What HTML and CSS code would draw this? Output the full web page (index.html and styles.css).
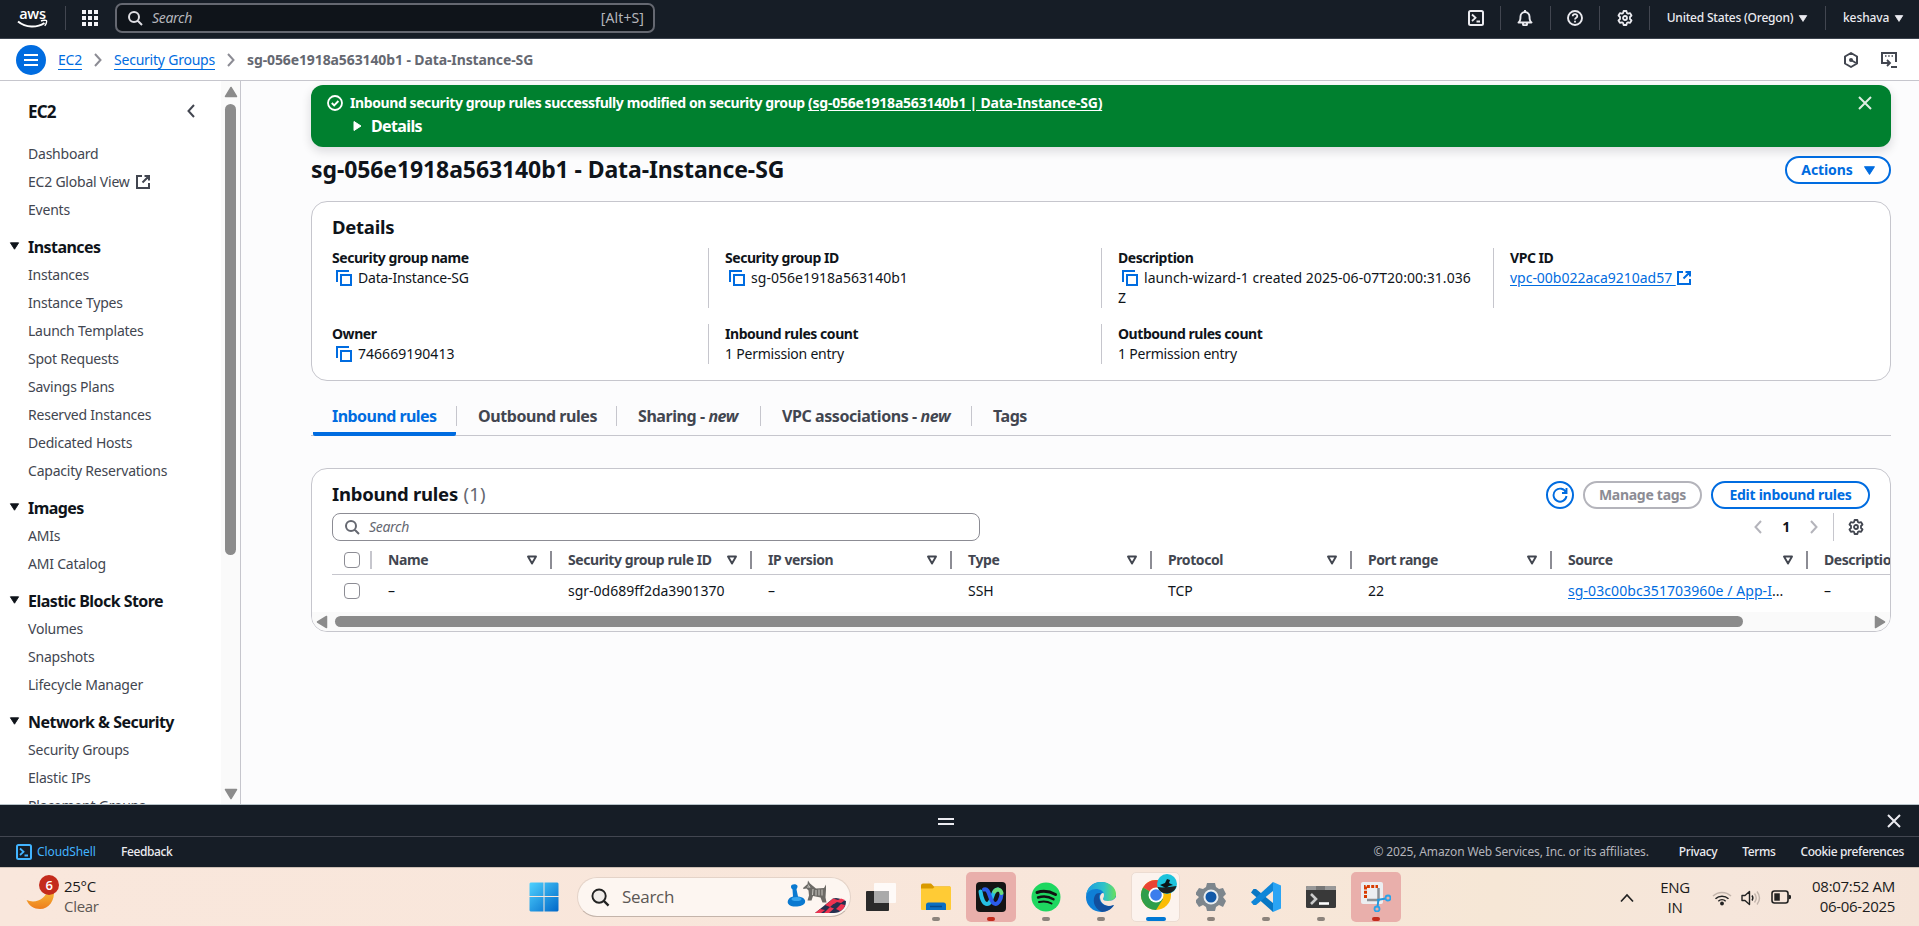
FILE: index.html
```html
<!DOCTYPE html>
<html lang="en">
<head>
<meta charset="utf-8">
<title>EC2 - Security group details</title>
<link rel="stylesheet" href="styles.css">
</head>
<body>
<svg class="defs" width="0" height="0">
  <symbol id="copy" viewBox="0 0 16 16"><path d="M1 12V1h12M5 5h10v10H5z" fill="none" stroke="currentColor" stroke-width="2"/></symbol>
  <symbol id="external" viewBox="0 0 16 16"><path d="M7 2H2v12h12V9M9.500 2H14v4.500M14 2 7.500 8.500" fill="none" stroke="currentColor" stroke-width="2"/></symbol>
  <symbol id="search" viewBox="0 0 16 16"><path d="M12 7A5 5 0 1 1 2 7a5 5 0 0 1 10 0zM10.500 10.500 15 15" fill="none" stroke="currentColor" stroke-width="2"/></symbol>
  <symbol id="gear" viewBox="0 0 16 16"><path d="M6.600 1h2.800l.5 2 1.200.7 2-.6 1.400 2.400L13 7v2l1.500 1.500-1.400 2.400-2-.6-1.200.7-.5 2H6.600l-.5-2-1.200-.7-2 .6-1.400-2.400L3 9V7L1.500 5.500l1.400-2.400 2 .6L6.100 3z" fill="none" stroke="currentColor" stroke-width="1.800" stroke-linejoin="round"/><circle cx="8" cy="8" r="2" fill="none" stroke="currentColor" stroke-width="1.800"/></symbol>
  <symbol id="shell" viewBox="0 0 16 16"><rect x="1" y="1" width="14" height="14" rx="1.500" fill="none" stroke="currentColor" stroke-width="2"/><path d="m4 4.500 3.500 3.300L4 11M8.500 11.500H12" fill="none" stroke="currentColor" stroke-width="1.800"/></symbol>
  <symbol id="close" viewBox="0 0 16 16"><path d="m2 2 12 12M14 2 2 14" fill="none" stroke="currentColor" stroke-width="2"/></symbol>
  <symbol id="left" viewBox="0 0 16 16"><path d="M11 2 5.500 8l5.500 6" fill="none" stroke="currentColor" stroke-width="2"/></symbol>
  <symbol id="right" viewBox="0 0 16 16"><path d="m5 2 5.500 6L5 14" fill="none" stroke="currentColor" stroke-width="2"/></symbol>
  <symbol id="down" viewBox="0 0 12 10"><path d="M1.500 1.500h9L6 8.500z" fill="currentColor" stroke="currentColor" stroke-width="1" stroke-linejoin="round"/></symbol>
  <symbol id="sort" viewBox="0 0 12 12"><path d="M2 2.500h8L6 9.500z" fill="none" stroke="currentColor" stroke-width="1.900" stroke-linejoin="round"/></symbol>
  <symbol id="scroll-tri" viewBox="0 0 14 12"><path d="M7 1.500 12.500 10.500H1.500z" fill="#8b8b8b" stroke="#8b8b8b" stroke-width="1.500" stroke-linejoin="round"/></symbol>
</svg>

<header class="topbar">
  <svg class="aws" viewBox="0 0 32 22">
    <text x="15.500" y="12" text-anchor="middle" class="aws-word">aws</text>
    <path d="M1 14.500c8 6.500 19 6.500 26.500 1.500" fill="none" stroke="#fff" stroke-width="2"/>
    <path d="M24 14c2-1 5-1 5.500-.3.500.8-.4 3.500-1.800 5" fill="none" stroke="#fff" stroke-width="1.400"/>
  </svg>
  <span class="sep"></span>
  <svg class="apps" viewBox="0 0 16 16" fill="#f3f3f7"><path d="M0 0h4v4H0zM6 0h4v4H6zM12 0h4v4h-4zM0 6h4v4H0zM6 6h4v4H6zM12 6h4v4h-4zM0 12h4v4H0zM6 12h4v4H6zM12 12h4v4h-4z"/></svg>
  <div class="topsearch"><svg class="ic"><use href="#search"/></svg><em>Search</em><span class="key">[Alt+S]</span></div>
  <div class="topright">
    <span class="cell c1"><svg class="ic"><use href="#shell"/></svg></span>
    <span class="cell c2"><svg class="ic" viewBox="0 0 16 16"><path d="M1.500 12.500c1.500-1 2-2.500 2-6a4.500 4.500 0 0 1 9 0c0 3.500.5 5 2 6zM8 0v2.500M6 13v1.500a1 1 0 0 0 1 .8h2a1 1 0 0 0 1-.8V13" fill="none" stroke="currentColor" stroke-width="1.900" stroke-linejoin="round"/></svg></span>
    <span class="cell c3"><svg class="ic" viewBox="0 0 16 16"><circle cx="8" cy="8" r="7" fill="none" stroke="currentColor" stroke-width="1.900"/><path d="M5.700 6.300c.1-3 4.700-2.800 4.600-.1C10.300 7.800 8 7.600 8 9.600M8 10.700v1.800" fill="none" stroke="currentColor" stroke-width="1.800"/></svg></span>
    <span class="cell c4"><svg class="ic"><use href="#gear"/></svg></span>
    <span class="cell c5">United States (Oregon)<svg class="caret"><use href="#down"/></svg></span>
    <span class="cell c6">keshava<svg class="caret"><use href="#down"/></svg></span>
  </div>
</header>

<div class="crumbs">
  <span class="menu"><i></i><i></i><i></i></span>
  <a class="crumb">EC2</a>
  <svg class="ic chev"><use href="#right"/></svg>
  <a class="crumb">Security Groups</a>
  <svg class="ic chev"><use href="#right"/></svg>
  <b>sg-056e1918a563140b1 - Data-Instance-SG</b>
  <span class="tools">
    <svg class="ic" viewBox="0 0 16 16"><path d="M8 1l6 3.500v7L8 15l-6-3.500v-7z" fill="none" stroke="currentColor" stroke-width="2" stroke-linejoin="round"/><circle cx="8" cy="8" r="2" fill="currentColor"/><path d="m8 8 5 3" stroke="currentColor" stroke-width="1.800"/></svg>
    <svg class="ic" viewBox="0 0 16 16"><path d="M5 11H1V1h14v9M10 15h6" fill="none" stroke="currentColor" stroke-width="2"/><path d="M4 4h1.500M7.200 4h1.500M10.500 4H12" stroke="currentColor" stroke-width="1.600"/><path d="M4 11h4.500M6 8l3 3-3 3" fill="none" stroke="currentColor" stroke-width="1.800"/></svg>
  </span>
</div>

<div class="middle">
  <aside class="side">
    <nav>
      <div class="navhead">EC2<svg class="ic"><use href="#left"/></svg></div>
      <a>Dashboard</a>
      <a>EC2 Global View<svg class="ic"><use href="#external"/></svg></a>
      <a>Events</a>
      <h4><svg class="caret"><use href="#down"/></svg>Instances</h4>
      <a>Instances</a><a>Instance Types</a><a>Launch Templates</a><a>Spot Requests</a><a>Savings Plans</a><a>Reserved Instances</a><a>Dedicated Hosts</a><a>Capacity Reservations</a>
      <h4><svg class="caret"><use href="#down"/></svg>Images</h4>
      <a>AMIs</a><a>AMI Catalog</a>
      <h4><svg class="caret"><use href="#down"/></svg>Elastic Block Store</h4>
      <a>Volumes</a><a>Snapshots</a><a>Lifecycle Manager</a>
      <h4><svg class="caret"><use href="#down"/></svg>Network &amp; Security</h4>
      <a>Security Groups</a><a>Elastic IPs</a><a>Placement Groups</a>
    </nav>
    <div class="vscroll"><svg class="tri"><use href="#scroll-tri"/></svg><span class="vthumb"></span><svg class="tri flip"><use href="#scroll-tri"/></svg></div>
  </aside>

  <main>
    <section class="flash">
      <svg class="ic" viewBox="0 0 16 16"><circle cx="8" cy="8" r="7" fill="none" stroke="currentColor" stroke-width="1.800"/><path d="m4.800 8 2.400 2.400 4.200-4.400" fill="none" stroke="currentColor" stroke-width="1.900"/></svg>
      <div class="flashbody">
        <p>Inbound security group rules successfully modified on security group <u>(sg-056e1918a563140b1 | Data-Instance-SG)</u></p>
        <p class="exp"><svg viewBox="0 0 10 12"><path d="M1.500 1.500 8.500 6l-7 4.500z" fill="#fff" stroke="#fff" stroke-linejoin="round"/></svg>Details</p>
      </div>
      <svg class="ic x"><use href="#close"/></svg>
    </section>

    <div class="titlebar">
      <h1>sg-056e1918a563140b1 - Data-Instance-SG</h1>
      <button class="btn actions">Actions<svg class="caret"><use href="#down"/></svg></button>
    </div>

    <section class="panel details">
      <h2>Details</h2>
      <div class="row tall">
        <div><b>Security group name</b><span><svg class="ic"><use href="#copy"/></svg>Data-Instance-SG</span></div>
        <div><b>Security group ID</b><span class="id"><svg class="ic"><use href="#copy"/></svg>sg-056e1918a563140b1</span></div>
        <div><b>Description</b><span class="id"><svg class="ic"><use href="#copy"/></svg>launch-wizard-1 created 2025-06-07T20:00:31.036<br>Z</span></div>
        <div><b>VPC ID</b><a class="id">vpc-00b022aca9210ad57 <svg class="ic"><use href="#external"/></svg></a></div>
      </div>
      <div class="row">
        <div><b>Owner</b><span class="id"><svg class="ic"><use href="#copy"/></svg>746669190413</span></div>
        <div><b>Inbound rules count</b><span>1 Permission entry</span></div>
        <div><b>Outbound rules count</b><span>1 Permission entry</span></div>
      </div>
    </section>

    <div class="tabs">
      <span class="tab on">Inbound rules</span><span class="tab t2">Outbound rules</span><span class="tab t3">Sharing - <em>new</em></span><span class="tab t4">VPC associations - <em>new</em></span><span class="tab t5">Tags</span>
    </div>

    <section class="panel rules">
      <div class="ruleshead">
        <h2>Inbound rules <span>(1)</span></h2>
        <span class="btn refresh"><svg class="ic" viewBox="0 0 16 16"><path d="M14 5.500A6.500 6.500 0 1 0 14.500 9M14.500 1v5H10" fill="none" stroke="currentColor" stroke-width="1.900"/></svg></span>
        <button class="btn off">Manage tags</button>
        <button class="btn edit">Edit inbound rules</button>
      </div>
      <div class="filter">
        <div class="box"><svg class="ic"><use href="#search"/></svg><em>Search</em></div>
        <div class="pager"><svg class="ic"><use href="#left"/></svg><span>1</span><svg class="ic"><use href="#right"/></svg></div>
        <span class="prefs"><svg class="ic"><use href="#gear"/></svg></span>
      </div>
      <div class="grid head">
        <span class="chk"><i></i></span>
        <span>Name<svg><use href="#sort"/></svg></span>
        <span>Security group rule ID<svg><use href="#sort"/></svg></span>
        <span>IP version<svg><use href="#sort"/></svg></span>
        <span>Type<svg><use href="#sort"/></svg></span>
        <span>Protocol<svg><use href="#sort"/></svg></span>
        <span>Port range<svg><use href="#sort"/></svg></span>
        <span>Source<svg><use href="#sort"/></svg></span>
        <span>Description</span>
      </div>
      <div class="grid line">
        <span class="chk"><i></i></span>
        <span>–</span><span>sgr-0d689ff2da3901370</span><span>–</span><span>SSH</span><span>TCP</span><span>22</span><span><a>sg-03c00bc351703960e / App-I</a>...</span><span>–</span>
      </div>
      <div class="hscroll"><svg class="tri lt"><use href="#scroll-tri"/></svg><span class="hthumb"></span><svg class="tri rt"><use href="#scroll-tri"/></svg></div>
    </section>
  </main>
</div>

<div class="split"><span class="grip"></span><svg class="ic"><use href="#close"/></svg></div>
<footer class="foot">
  <a class="cs"><svg class="ic"><use href="#shell"/></svg>CloudShell</a>
  <b>Feedback</b>
  <span class="copyr">© 2025, Amazon Web Services, Inc. or its affiliates.</span>
  <b class="f1">Privacy</b><b class="f2">Terms</b><b class="f3">Cookie preferences</b>
</footer>

<div class="taskbar">
  <div class="weather">
    <svg viewBox="0 0 36 38"><defs><linearGradient id="mn" x1="0" y1="0" x2="0" y2="1"><stop offset="0" stop-color="#f7c03a"/><stop offset="1" stop-color="#ee7d1d"/></linearGradient></defs><path d="M29 14c1 12-5 20-14 20C9 34 4 31 1.500 25c9 4 20-1 21-11z" fill="url(#mn)"/><circle cx="24" cy="10" r="10" fill="#c42b1c"/><text x="24" y="15" text-anchor="middle" class="badge">6</text></svg>
    <div><span>25°C</span><span class="dim">Clear</span></div>
  </div>
  <div class="apps-row">
    <span class="tile"><svg width="30" height="30" viewBox="0 0 30 30"><defs><linearGradient id="wn" x1="0" y1="0" x2="1" y2="1"><stop offset="0" stop-color="#4fd2ff"/><stop offset="1" stop-color="#0067c8"/></linearGradient></defs><path d="M1.500.5h13v13.500h-14V1.500zM15.500.5h13l1 1V14h-14zM.5 15h14v14.500h-13l-1-1zM15.500 15h14v13.500l-1 1h-13z" fill="url(#wn)"/></svg></span>
    <div class="pill">
      <svg class="mag" viewBox="0 0 20 20"><circle cx="8.500" cy="8.500" r="7" fill="#f0ece9" stroke="#222" stroke-width="2"/><path d="m13.500 13.500 5 5" stroke="#222" stroke-width="2.400"/></svg>
      Search
      <svg class="art" viewBox="0 0 60 34">
        <path d="M28 33 46 18.500q3-.8 6 0l7 2.500q0 6-4 9-3 3-8 3z" fill="#25304f"/><path d="m38 25 4-3 5 1.500-4 3.500zM46 18.500l5 1.500 3-1.500 4 1.500-4 3-4-1-3 2-5-2zM28 33l5-4 5 1-4 3zM43 27l4 1.500-5 4.500h-5l2-2zM54 24l4 1q-1 4-5 6l-4-2z" fill="#ee3350"/>
        <path d="M4 6.500C4 3.500 10 3.500 10.500 6c.3 1.500-1 2.500-1 3.500l1.500 7c5 .5 8 3 7 6-1.500 4.500-14 6-17 1-1-3 1-6 5-7l-.5-7C4.500 8.500 4 8 4 6.500z" fill="#0a79d0"/><ellipse cx="9.500" cy="19" rx="5" ry="2" fill="#37a5ee"/>
        <path d="m16 8 4.500-4 .5-3.500 2 3 3 2.500 3 2.500 8-.500 2-3.500v5l-.5 8 1 5h-4l-2-5-7.500-1.500-1.500 4.500h-4l1.500-5-.5-5-2-2-3 .5z" fill="#6c6a66"/><path d="m26 9-.5 6M29 10v5.500M32 9.500v6M35 9.500v6M21 4.500l2 3M20 7h3" stroke="#c9c6c0"/>
      </svg>
    </div>
    <span class="tile"><svg width="32" height="30" viewBox="0 0 32 30"><rect x="1" y="9" width="23" height="20" rx="1" fill="#2a2a2a"/><rect x="9" y="1" width="22" height="20" rx="1" fill="#fff" fill-opacity=".8"/><path d="M9 9h15v12H9z" fill="#aaa"/></svg></span>
    <span class="tile"><svg width="30" height="30" viewBox="0 0 30 30"><path d="M0 3.500q0-2 2-2h8l3 3h16v5H0z" fill="#d99a00"/><path d="M0 6.500h12l2-2h15q1 0 1 1v21.500q0 1-1 1H1q-1 0-1-1z" fill="#ffcb35"/><path d="M5 28v-5q0-2.500 2.500-2.500h15q2.500 0 2.500 2.500v5z" fill="#0a6fc2"/><path d="M9 24.500h12" stroke="#064a8a" stroke-width="1.500"/></svg><i class="dot"></i></span>
    <span class="tile red"><svg width="30" height="30" viewBox="0 0 30 30"><rect width="30" height="30" rx="4" fill="#141414"/><path d="M4.500 9.500C5.500 17 8 22 11 22s4.500-5 6-9.500C18.500 8.500 20 7 22 7.500" fill="none" stroke="#25c0e4" stroke-width="4" stroke-linecap="round"/><path d="M8 7.500c3-1 4.500 2 6 7S17 22 19.500 22s5.500-4 6-10" fill="none" stroke="#2b5bea" stroke-width="4" stroke-linecap="round"/><path d="M18.500 9.500c2.500-3 6-2.500 7 1.500" fill="none" stroke="#6bdc7d" stroke-width="4" stroke-linecap="round"/></svg><i class="dot"></i></span>
    <span class="tile"><svg width="30" height="30" viewBox="0 0 30 30"><circle cx="15" cy="15" r="14.500" fill="#1ed760"/><g fill="none" stroke="#111" stroke-linecap="round"><path d="M6 10.500c6-2 13-1 18.500 2" stroke-width="3"/><path d="M7 15.500c5-1.500 11-1 15.500 1.800" stroke-width="2.400"/><path d="M8 20c4-1 9-.6 12.500 1.500" stroke-width="2"/></g></svg><i class="dot"></i></span>
    <span class="tile"><svg width="30" height="30" viewBox="0 0 30 30"><defs><linearGradient id="eg" x1="0" y1="0" x2="1" y2="0"><stop offset="0" stop-color="#1d9be0"/><stop offset=".6" stop-color="#2dc3c8"/><stop offset="1" stop-color="#6be05a"/></linearGradient></defs><circle cx="15" cy="15" r="15" fill="#0f7fd6"/><path d="M0 14C1 5 7 0 15 0c9 0 15 6 15 12 0 5-4 7-8 7-3 0-5-1-5-2s1-1 1-4c0-4-4-6-8-6-5 0-9 3-10 7z" fill="url(#eg)"/><path d="M10 12c-4 5-3 14 6 18 5 0 10-3 12-7-6 3-16 0-15-8 0-2 1-3 2-4-2 0-4 0-5 1z" fill="#124f9e"/><path d="M18 13c0 3-1 3-1 4s2 2 5 2c3 0 6-1 8-4v8h-2c-5 3-14 0-14-8 0-3 4-6 4-2z" fill="#f8e6da"/><path d="M13.500 16c0 6 7 10 14.500 7-4 5-14 3-16-3z" fill="#124f9e"/></svg><i class="dot"></i></span>
    <span class="tile chrome"><svg width="40" height="44" viewBox="0 0 40 44"><circle cx="16" cy="26" r="15" fill="#fbbc05"/><path d="M16 26 3 18.500A15 15 0 0 1 29 18.500z" fill="#ea4335"/><path d="M16 26 3 18.500A15 15 0 0 0 16 41l7-11z" fill="#2f9e4b"/><path d="M16 18.500h13.500L31 26l-7 1z" fill="#fbbc05"/><circle cx="16" cy="26" r="7.500" fill="#fff"/><circle cx="16" cy="26" r="5.800" fill="#3b7ded"/><circle cx="27" cy="15" r="10" fill="#1cc3dc"/><path d="M17.500 18c5 1 12 0 19-1a10 10 0 0 1-19 1z" fill="#1b1f22"/><path d="m20 16 5-2 2-4 3 1-1 3 4 2-4 1-3 2z" fill="#0c1417"/></svg><i class="dot wide"></i></span>
    <span class="tile"><svg width="30" height="30" viewBox="0 0 30 30"><path d="M11 1h8l1 4 3 2 4-1 3 6-3 3 3 4-3 6-4-2-3 2-1 4h-8l-1-4-3-2-4 2-4-6 4-4-4-3 4-6 4 1 3-2z" fill="#7d868d"/><circle cx="15" cy="15" r="7.500" fill="#e9edf0"/><circle cx="15" cy="15" r="5.500" fill="#1259a8"/></svg><i class="dot"></i></span>
    <span class="tile"><svg width="30" height="30" viewBox="0 0 30 30"><path d="M22 0v30L0 10.500 2.500 7 5 7l17 14z" fill="#0877c4"/><path d="M22 0v9L5 23H2.500L0 20z" fill="#0f86d8"/><path d="m22 0 8 3.500v23L22 30z" fill="#2aa4f4"/></svg><i class="dot"></i></span>
    <span class="tile"><svg width="30" height="22" viewBox="0 0 30 22"><rect width="30" height="22" rx="1.500" fill="#393939"/><path d="M0 1.500Q0 0 1.500 0h27Q30 0 30 1.500V4H0z" fill="#999"/><path d="M10 0h9v4h-9z" fill="#777"/><path d="m5 8 5 5-5 5" fill="none" stroke="#ccc" stroke-width="2.600"/><path d="M13 17.500h10" stroke="#fff" stroke-width="2.600"/></svg><i class="dot"></i></span>
    <span class="tile red"><svg width="30" height="30" viewBox="0 0 30 30"><rect width="22" height="22" rx="2" fill="#eceef1"/><path d="M4.500 16V4.500H17" fill="none" stroke="#d83b01" stroke-width="3" stroke-dasharray="3 1.300"/><path d="M17.500 6v12H6" fill="none" stroke="#8b9095" stroke-width="2.500"/><path d="m16 18 9-1.500M17.500 17l-1 8" stroke="#2497dc" stroke-width="2"/><circle cx="27" cy="16" r="2.500" fill="none" stroke="#2ba3e8" stroke-width="1.800"/><circle cx="16" cy="27" r="2.500" fill="none" stroke="#2ba3e8" stroke-width="1.800"/></svg><i class="dot"></i></span>
  </div>
  <div class="tray">
    <svg class="up" viewBox="0 0 14 10"><path d="m1 8.500 6-6.500 6 6.500" fill="none" stroke="#222" stroke-width="1.700"/></svg>
    <div class="lang"><span>ENG</span><span>IN</span></div>
    <svg class="wifi" viewBox="0 0 20 16"><g fill="none" stroke="#222" stroke-width="1.500"><path d="M1 6a13 13 0 0 1 18 0" stroke="#c2b4ab"/><path d="M3.500 8.700a9.500 9.500 0 0 1 13 0M6.300 11.300a5.400 5.400 0 0 1 7.400 0"/></g><circle cx="10" cy="13.500" r="1.900" fill="#222"/></svg>
    <svg class="vol" viewBox="0 0 20 16"><path d="M1 5.500h3L8.500 1.500v13L4 10.500H1z" fill="none" stroke="#222" stroke-width="1.400" stroke-linejoin="round"/><path d="M11 5.500q1.800 2.500 0 5" fill="none" stroke="#222" stroke-width="1.400"/><path d="M13.500 3.500q3.500 4.500 0 9M16 1.500q5 6.500 0 13" fill="none" stroke="#c2b4ab" stroke-width="1.400"/></svg>
    <svg class="bat" viewBox="0 0 21 14"><rect x="1" y="1" width="16" height="12" rx="2.500" fill="none" stroke="#222" stroke-width="1.600"/><rect x="3.300" y="3.300" width="5.500" height="7.400" fill="#222"/><path d="M17.500 4.500 20 5.500v3l-2.500 1z" fill="#222"/></svg>
    <div class="clock"><span>08:07:52 AM</span><span>06-06-2025</span></div>
  </div>
</div>
</body>
</html>
```
FILE: styles.css
```css
* { box-sizing: border-box; }
body { margin: 0; width: 1919px; height: 926px; overflow: hidden; display: flex; flex-direction: column; font: 14px/20px "Noto Sans", "Open Sans", sans-serif; letter-spacing: -.22px; color: #0f141a; background: #fff; }
h1, h2, h4, p { margin: 0; }
b, h1, h2, h4 { font-weight: 700; }
.defs { position: absolute; }
.ic { width: 16px; height: 16px; flex: none; }
.caret { width: 12px; height: 10px; flex: none; }
a { color: #006ce0; }

/* Top navigation */
.topbar { flex: none; height: 39px; display: flex; align-items: center; background: #161d26; border-bottom: 1px solid #3c434e; padding: 0 0 2px 17px; color: #ebebf0; }
.aws { width: 32px; height: 22px; overflow: visible; }
.aws-word { font: 600 14.5px/12px "Open Sans", sans-serif; fill: #fff; letter-spacing: -.2px; }
.sep { width: 1px; height: 24px; background: #424650; margin: 0 16px; }
.apps { width: 16px; height: 16px; }
.topsearch { width: 540px; height: 30px; margin-left: 17px; border: 2px solid #656871; border-radius: 7px; background: #0f141a; display: flex; align-items: center; padding: 0 9px 0 10px; color: #b4b4bb; letter-spacing: -.3px; }
.topsearch .ic { margin-right: 9px; color: #dedee3; }
.key { margin-left: auto; letter-spacing: .1px; }
.topright { display: flex; margin-left: auto; align-items: center; font-size: 12px; font-weight: 500; letter-spacing: -.2px; }
.cell { height: 24px; display: flex; align-items: center; justify-content: center; border-left: 1px solid #424650; }
.cell .caret { margin-left: 5px; width: 10px; height: 9px; }
.c1 { width: 49px; border-left: 0; }
.c2 { width: 50px; padding-right: 2px; }
.c3 { width: 49px; }
.c4 { width: 50px; padding-left: 1px; }
.c5 { width: 176px; }
.c6 { width: 94px; justify-content: flex-start; padding-left: 17px; letter-spacing: -.1px; }

/* Breadcrumb bar */
.crumbs { flex: none; height: 42px; display: flex; align-items: center; padding-left: 16px; border-bottom: 1px solid #c6c6cd; }
.menu { width: 30px; height: 30px; border-radius: 50%; background: #006ce0; display: flex; flex-direction: column; align-items: center; justify-content: center; gap: 3px; margin-right: 12px; }
.menu i { width: 14px; height: 2px; background: #fff; }
.crumb { border-bottom: 1px solid #006ce0; line-height: 19px; }
.chev { margin: 0 8px; color: #8c8c94; }
.crumbs b { color: #656871; letter-spacing: -.11px; }
.tools { margin: 0 22px 0 auto; display: flex; gap: 22px; color: #424650; }

.middle { flex: none; height: 723px; display: flex; overflow: hidden; }

/* Service navigation */
.side { width: 241px; flex: none; border-right: 1px solid #c6c6cd; display: flex; overflow: hidden; }
.side nav { flex: 1; padding-left: 10px; }
.navhead { height: 59px; padding: 2px 22px 0 18px; display: flex; align-items: center; justify-content: space-between; font-size: 17px; font-weight: 700; letter-spacing: -.8px; }
.navhead .ic { color: #424650; margin-top: -1px; }
.side a { display: flex; align-items: center; height: 28px; padding-left: 18px; color: #424650; }
.side a .ic { margin-left: 5px; }
.side h4 { height: 37px; padding-top: 8px; font-size: 16px; letter-spacing: -.54px; display: flex; align-items: center; gap: 8px; margin-left: -1px; }
.side h4 .caret { width: 11px; margin-top: -2px; }
.vscroll { width: 19px; background: #fafafa; display: flex; flex-direction: column; padding: 5px 3px 4px; }
.tri { width: 14px; height: 12px; flex: none; }
.flip { transform: rotate(180deg); margin-top: auto; }
.vthumb { width: 11px; height: 451px; margin: 6px 0 0 1px; border-radius: 6px; background: #8b8b8b; }

/* Content */
main { flex: 1; background: #fcfcfd; padding: 4px 28px 0 70px; min-width: 0; }
.flash { height: 62px; border-radius: 12px; background: #00802f; color: #fff; display: flex; padding: 10px 18px 0 16px; box-shadow: 0 4px 10px 1px rgba(0, 7, 22, .12); font-weight: 700; }
.flashbody { margin-left: 7px; flex: 1; }
.flashbody p { line-height: 16px; letter-spacing: -.41px; }
.flashbody u { letter-spacing: -.22px; text-underline-offset: 2px; }
.flashbody .exp { display: flex; align-items: center; gap: 8px; font-size: 16px; line-height: 20px; margin-top: 5px; letter-spacing: -.63px; }
.exp svg { width: 11px; height: 12px; margin-left: 2px; }
.flash > .x { color: #dfeee3; }
.titlebar { height: 54px; display: flex; align-items: center; justify-content: space-between; padding-bottom: 8px; }
h1 { font-size: 23px; line-height: 28px; letter-spacing: -.1px; margin-top: -3px; }
.btn { height: 28px; border: 2px solid #006ce0; border-radius: 14px; background: #fff; color: #006ce0; font: 700 14px/20px "Noto Sans", sans-serif; padding: 0; display: flex; align-items: center; justify-content: center; letter-spacing: -.28px; }
.actions { width: 106px; gap: 10px; letter-spacing: -.1px; padding-left: 1px; }
.actions .caret { width: 13px; height: 11px; }
.panel { background: #fff; border: 1px solid #c6c6cd; border-radius: 16px; overflow: hidden; }
h2 { font-size: 18.500px; line-height: 24px; letter-spacing: -.25px; }

.details { height: 180px; padding: 13px 20px 0; }
.row { display: grid; grid-template-columns: 376px 393px 392px 376px; height: 40px; margin-top: 16px; }
.row.tall { height: 60px; margin-top: 9px; }
.row div { display: flex; flex-direction: column; align-items: flex-start; }
.row div + div { border-left: 1px solid #c6c6cd; padding-left: 16px; }
.row b { letter-spacing: -.45px; }
.row span .ic { color: #006ce0; vertical-align: -3px; margin: 0 6px 0 4px; }
.id { letter-spacing: .03px; white-space: nowrap; }
.row a { text-decoration: underline; text-underline-offset: 2px; letter-spacing: -.02px; }
.row a .ic { vertical-align: -3px; }

.tabs { height: 39px; margin-top: 16px; border-bottom: 1px solid #c6c6cd; display: flex; align-items: flex-start; padding: 9px 0 0 2px; }
.tab { font-weight: 700; font-size: 16px; line-height: 20px; letter-spacing: -.43px; color: #424650; white-space: nowrap; height: 20px; }
.tab + .tab { border-left: 1px solid #c6c6cd; padding-left: 21px; }
.on { width: 143px; height: 30px; padding-left: 19px; color: #006ce0; border-bottom: 4px solid #006ce0; border-radius: 0 0 2px 2px; letter-spacing: -.55px; }
.t2 { width: 160px; }
.t3 { width: 144px; }
.t4 { width: 211px; }

.rules { height: 164px; margin-top: 32px; }
.ruleshead { display: flex; align-items: center; padding: 12px 20px 0; gap: 9px; height: 40px; }
.ruleshead h2 { margin: -2px auto 0 0; }
.ruleshead h2 span { font-weight: 400; color: #656871; letter-spacing: .2px; margin-left: 1px; }
.refresh { width: 28px; }
.off { width: 119px; border-color: #b4b4bb; color: #8c8c94; }
.edit { width: 159px; }
.filter { display: flex; margin-top: 4px; padding: 0 21px 0 20px; height: 28px; align-items: center; }
.box { width: 648px; height: 28px; border: 1px solid #8c8c94; border-radius: 8px; display: flex; align-items: center; padding-left: 11px; gap: 9px; color: #656871; letter-spacing: -.3px; }
.pager { display: flex; align-items: center; margin-left: auto; color: #b4b4bb; gap: 16px; margin-right: 11px; }
.pager span { color: #0f141a; font-weight: 700; }
.prefs { height: 28px; border-left: 1px solid #c6c6cd; padding: 6px 5px 0 14px; color: #424650; }
.grid { display: grid; grid-template-columns: 40px 180px 200px 200px 200px 200px 200px 256px 240px; margin-left: 20px; }
.head { height: 34px; align-items: center; border-bottom: 1px solid #c6c6cd; color: #424650; font-weight: 700; padding-top: 4px; letter-spacing: -.42px; }
.head span { border-right: 2px solid #8c8c94; height: 18px; line-height: 18px; display: flex; align-items: center; justify-content: space-between; padding: 0 12px 0 16px; white-space: nowrap; }
.head span svg { width: 12px; height: 12px; }
.head span:last-child { border-right: 0; }
.head .chk { border-color: #c6c6cd; }
.grid .chk { padding: 0 0 0 12px; }
.chk i { width: 16px; height: 16px; border: 1px solid #8c8c94; border-radius: 4px; display: block; }
.line { height: 37px; padding-top: 6px; }
.line span { padding-left: 16px; white-space: nowrap; letter-spacing: 0; }
.line .chk { padding-top: 2px; }
.line a { text-decoration: underline; text-underline-offset: 2px; letter-spacing: .08px; }
.hscroll { height: 19px; background: #fafafa; display: flex; align-items: center; padding: 0 3px; }
.hthumb { width: 1408px; height: 11px; border-radius: 6px; background: #8b8b8b; margin-left: 6px; }
.lt { transform: rotate(-90deg); }
.rt { transform: rotate(90deg); margin-left: auto; }

/* Bottom bars */
.split { flex: none; height: 33px; border-top: 1px solid #b8c3c9; border-bottom: 1px solid #424650; background: #161d26; color: #ebebf0; display: flex; align-items: center; padding: 0 17px 0 938px; justify-content: space-between; }
.grip { width: 16px; height: 7px; border: solid #ebebf0; border-width: 2px 0; margin-top: 2px; }
.foot { flex: none; height: 30px; background: #161d26; display: flex; align-items: center; padding: 0 15px 0 16px; font-size: 12px; color: #ebebf0; }
.foot b { font-weight: 500; letter-spacing: -.38px; }
.cs { display: flex; gap: 5px; align-items: center; color: #42b4ff; width: 105px; letter-spacing: -.1px; }
.copyr { margin-left: auto; color: #b4b4bb; letter-spacing: -.14px; margin-right: 30px; }
.f1, .f2 { margin-right: 25px; }

/* Desktop taskbar */
.taskbar { flex: none; height: 59px; border-top: 1px solid #cdbfb5; background: linear-gradient(90deg, #f9e7dc, #f8e6da 60%, #f6e7d6 78%, #f6e6db 90%, #f5e4d8); display: flex; font: 15px/20px "Open Sans", "Noto Sans", sans-serif; letter-spacing: -.3px; color: #1b1b1b; }
.weather { width: 519px; display: flex; padding: 7px 0 0 25px; }
.weather svg { width: 36px; height: 38px; }
.badge { font: 600 13px "Open Sans", sans-serif; fill: #fff; }
.weather div { margin: 1px 0 0 3px; }
.weather div span, .lang span, .clock span { display: block; }
.dim { color: #5d5753; }
.apps-row { display: flex; gap: 5px; padding-top: 4px; }
.tile { width: 50px; height: 50px; border-radius: 5px; display: flex; align-items: center; justify-content: center; position: relative; }
.red { background: #e9afab; }
.dot { position: absolute; left: 21px; bottom: 1px; width: 8px; height: 4px; border-radius: 2px; background: #8c837c; }
.red .dot { background: #c42b1c; }
.chrome { background: #fcf3ee; border: 1px solid #ecdcd2; width: 49px; margin-right: 1px; }
.chrome svg { margin: -13px 0 0 8px; flex: none; }
.chrome .dot { left: 14px; bottom: 0; width: 20px; background: #0078d4; }
.pill { width: 274px; height: 40px; margin: 5px 0 0 3px; border: 1px solid #e4d3c8; border-bottom-color: #c4b4aa; border-radius: 20px; background: #fdf6f1; display: flex; align-items: center; font-size: 17px; color: #5b5754; }
.mag { width: 19px; height: 19px; margin: 0 12px 0 13px; }
.art { width: 60px; height: 34px; margin-left: auto; margin-right: 3px; }
.tray { flex: 1; display: flex; padding-top: 8px; }
.up { width: 14px; height: 10px; margin: 17px 0 0 219px; }
.lang { width: 44px; margin: 1px 15px 0 19px; text-align: center; }
.wifi { width: 20px; height: 16px; margin: 14px 9px 0 0; }
.vol { width: 20px; height: 16px; margin: 14px 10px 0 0; }
.bat { width: 21px; height: 14px; margin-top: 14px; }
.clock { margin: 0 24px 0 auto; text-align: right; }
```
